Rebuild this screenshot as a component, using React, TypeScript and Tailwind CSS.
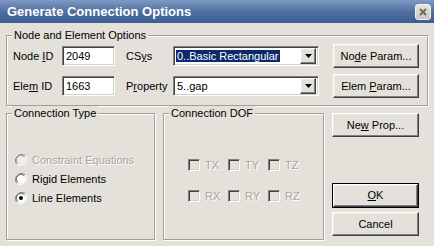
import React from 'react';

const FONT = { fontFamily: '"Liberation Sans", Arial, sans-serif' };

const raised =
  'border border-t-white border-l-white border-b-[#404040] border-r-[#404040] shadow-[inset_-1px_-1px_0_#808080,inset_1px_1px_0_#ece9e3] bg-[#e4e1da]';
const sunken =
  'border border-t-[#808080] border-l-[#808080] border-b-white border-r-white shadow-[inset_1px_1px_0_#404040,inset_-1px_-1px_0_#d4d0c8]';
const etched =
  'border border-[#a19e96] shadow-[inset_1px_1px_0_#fff,1px_1px_0_#fff]';

function Button({ children, className = '' }: { children: React.ReactNode; className?: string }) {
  return (
    <div className={`flex items-center justify-center text-[11px] leading-none ${raised} ${className}`}>
      <span>{children}</span>
    </div>
  );
}

function Legend({ children }: { children: React.ReactNode }) {
  return (
    <legend className="ml-[5px] px-[2px] text-[11px] leading-[14px] bg-[#e4e1da]">{children}</legend>
  );
}

function Combo({ value, selected }: { value: string; selected?: boolean }) {
  return (
    <div className={`w-[146px] h-[20px] bg-white flex items-center pl-[2px] pr-[2px] ${sunken}`}>
      <div className="flex-1 text-[11px] leading-[13px]">
        {selected ? (
          <span className="bg-[#0b2a6b] text-white px-[1px]">{value}</span>
        ) : (
          <span className="px-[1px]">{value}</span>
        )}
      </div>
      <div className={`w-[16px] h-[16px] flex items-center justify-center ${raised}`}>
        <svg width="7" height="4" viewBox="0 0 7 4">
          <path d="M0 0h7L3.5 4z" fill="#000" />
        </svg>
      </div>
    </div>
  );
}

function Radio({ label, checked, disabled }: { label: string; checked?: boolean; disabled?: boolean }) {
  return (
    <div className="h-[19px] flex items-center">
      <svg width="12" height="12" viewBox="0 0 12 12" className="shrink-0">
        <path d="M10.2 1.8A6 6 0 0 0 1.8 10.2" stroke="#808080" strokeWidth="1" fill="none" />
        <path d="M1.8 10.2A6 6 0 0 0 10.2 1.8" stroke="#ffffff" strokeWidth="1" fill="none" />
        <circle cx="6" cy="6" r="4.5" fill={disabled ? '#f0eee9' : '#fff'} />
        <path d="M9.2 2.8A4.5 4.5 0 0 0 2.8 9.2" stroke="#404040" strokeWidth="1" fill="none" opacity={disabled ? 0.4 : 0.7} />
        {checked && <circle cx="6" cy="6" r="2" fill="#000" />}
      </svg>
      <span
        className={`ml-[5px] text-[11px] leading-[14px] ${
          disabled ? 'text-[#a8a59e] [text-shadow:1px_1px_0_#fff]' : 'text-black'
        }`}
      >
        {label}
      </span>
    </div>
  );
}

function DofBox({ label }: { label: string }) {
  return (
    <div className="w-[40px] flex items-center">
      <div className={`w-[12px] h-[12px] shrink-0 bg-[#e4e1da] ${sunken}`} />
      <span className="ml-[5px] text-[11px] leading-[14px] text-[#a8a59e] [text-shadow:1px_1px_0_#fff]">
        {label}
      </span>
    </div>
  );
}

export default function App() {
  return (
    <div className="w-[434px] h-[246px] bg-[#e4e1da] flex flex-col overflow-hidden" style={FONT}>
      {/* title bar */}
      <div className="h-[23px] shrink-0 flex items-center pl-[7px] pr-[3px] bg-gradient-to-b from-[#7f9ac4] via-[#4f6fa0] to-[#3c5e90]">
        <span className="flex-1 text-white font-bold text-[13px] leading-none">Generate Connection Options</span>
        <div className="w-[16px] h-[16px] rounded-[3px] border border-[#f2f2f2] bg-gradient-to-b from-[#e8e6e2] to-[#c9c6bf] flex items-center justify-center">
          <svg width="8" height="8" viewBox="0 0 8 8">
            <path d="M1 1L7 7M7 1L1 7" stroke="#6f6756" strokeWidth="1.8" />
          </svg>
        </div>
      </div>

      <div className="px-[6px] pt-[5px]">
        {/* Node and Element Options */}
        <fieldset className={`w-[422px] ${etched}`}>
          <Legend>Node and Element Options</Legend>
          <div className="pl-[6px] pt-[2px] pb-[7px] flex flex-col gap-[6px] text-[11px] leading-[14px]">
            <div className="h-[24px] flex items-center">
              <span className="w-[49px]">
                Node <u>I</u>D
              </span>
              <div className={`w-[53px] h-[20px] bg-white flex items-center pl-[3px] ${sunken}`}>2049</div>
              <span className="ml-[11px] w-[47px]">
                CS<u>y</u>s
              </span>
              <Combo value="0..Basic Rectangular" selected />
              <Button className="ml-[14px] w-[86px] h-[24px]">
                No<u>d</u>e Param...
              </Button>
            </div>
            <div className="h-[24px] flex items-center">
              <span className="w-[49px]">
                Ele<u>m</u> ID
              </span>
              <div className={`w-[53px] h-[20px] bg-white flex items-center pl-[3px] ${sunken}`}>1663</div>
              <span className="ml-[11px] w-[47px]">
                P<u>r</u>operty
              </span>
              <Combo value="5..gap" />
              <Button className="ml-[14px] w-[86px] h-[24px]">
                Elem <u>P</u>aram...
              </Button>
            </div>
          </div>
        </fieldset>

        <div className="flex">
          {/* Connection Type */}
          <fieldset className={`w-[149px] h-[134px] ${etched}`}>
            <Legend>Connection Type</Legend>
            <div className="pl-[8px] pt-[30px] flex flex-col">
              <Radio label="Constraint Equations" disabled />
              <Radio label="Rigid Elements" />
              <Radio label="Line Elements" checked />
            </div>
          </fieldset>

          {/* Connection DOF */}
          <fieldset className={`ml-[8px] w-[161px] h-[134px] ${etched}`}>
            <Legend>Connection DOF</Legend>
            <div className="pl-[24px] pt-[35px] flex flex-col gap-[12px]">
              <div className="h-[19px] flex items-center">
                <DofBox label="TX" />
                <DofBox label="TY" />
                <DofBox label="TZ" />
              </div>
              <div className="h-[19px] flex items-center">
                <DofBox label="RX" />
                <DofBox label="RY" />
                <DofBox label="RZ" />
              </div>
            </div>
          </fieldset>

          {/* buttons */}
          <div className="ml-[8px] w-[87px] flex flex-col">
            <Button className="mt-[7px] h-[24px]">
              Ne<u>w</u> Prop...
            </Button>
            <div className="mt-[46px] h-[25px] border border-black">
              <Button className="h-full">
                <u>O</u>K
              </Button>
            </div>
            <Button className="mt-[4px] h-[24px]">Cancel</Button>
          </div>
        </div>
      </div>
    </div>
  );
}
